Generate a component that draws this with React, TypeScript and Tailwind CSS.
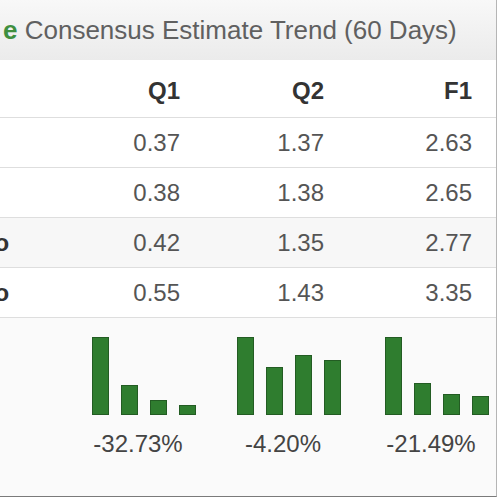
import React from "react";

export default function App() {
    const rows = [
        { label: "Current", values: ["0.37", "1.37", "2.63"] },
        { label: "7 Days Ago", values: ["0.38", "1.38", "2.65"] },
        { label: "30 Days Ago", values: ["0.42", "1.35", "2.77"] },
        { label: "60 Days Ago", values: ["0.55", "1.43", "3.35"] },
    ];

    const charts = [
        { bars: [78, 30, 15, 10], change: "-32.73%", width: "w-[145px]" },
        { bars: [78, 48, 60, 55], change: "-4.20%", width: "w-[148px]" },
        { bars: [78, 32, 21, 19], change: "-21.49%", width: "w-[112px]" },
    ];

    return (
        <div
            className="w-[497px] h-[497px] overflow-hidden bg-white border-r border-b border-r-[#b5b5b5] border-b-[#7a7a7a] flex flex-col"
            style={{ fontFamily: '"Liberation Sans", Arial, sans-serif' }}
        >
            <div className="h-[60px] shrink-0 flex items-center pl-[3px] bg-gradient-to-b from-[#f8f8f8] to-[#ebebeb] text-[26px] text-[#606060] whitespace-nowrap">
                <span className="text-[#3f8f3f] font-bold">e</span>
                <span>&nbsp;Consensus Estimate Trend (60 Days)</span>
            </div>

            <div className="h-[57px] shrink-0 flex items-end pb-[8px] text-[24px] font-bold text-[#333]">
                <div className="w-[36px]" />
                <div className="w-[144px] text-right">Q1</div>
                <div className="w-[144px] text-right">Q2</div>
                <div className="w-[148px] text-right">F1</div>
            </div>

            {rows.map((row, i) => (
                <div
                    key={i}
                    className={`h-[50px] shrink-0 flex items-center border-t border-[#dedede] text-[24px] text-[#555] ${i === 2 ? "bg-[#f7f7f7]" : "bg-white"}`}
                >
                    <div className="w-[36px] overflow-visible">
                        <div className="ml-[-134px] whitespace-nowrap font-bold text-[#333]">{row.label}</div>
                    </div>
                    <div className="w-[144px] text-right">{row.values[0]}</div>
                    <div className="w-[144px] text-right">{row.values[1]}</div>
                    <div className="w-[148px] text-right">{row.values[2]}</div>
                </div>
            ))}

            <div className="flex-1 border-t border-[#dedede] bg-[#fafafa] flex pl-[92px] pt-[19px]">
                {charts.map((chart, i) => (
                    <div key={i} className={`${chart.width} shrink-0 flex flex-col`}>
                        <div className="h-[78px] flex items-end gap-[12px]">
                            {chart.bars.map((h, j) => (
                                <div
                                    key={j}
                                    className="w-[17px] bg-[#2f7d2f] border border-[#235c23]"
                                    style={{ height: h }}
                                />
                            ))}
                        </div>
                        <div className="w-[106px] pr-[14px] mt-[11px] text-center text-[24px] text-[#444] whitespace-nowrap">
                            {chart.change}
                        </div>
                    </div>
                ))}
            </div>
        </div>
    );
}
